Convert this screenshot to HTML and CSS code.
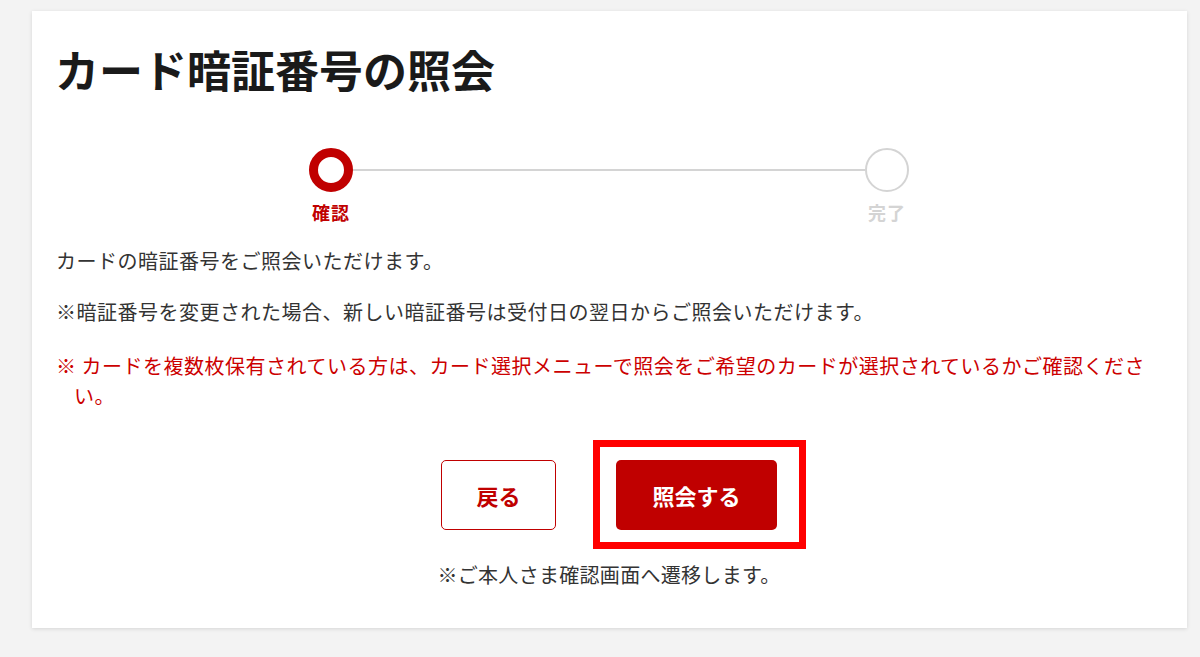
FILE: index.html
```html
<!DOCTYPE html>
<html lang="ja">

<head>
    <meta charset="UTF-8">
    <meta
        name="viewport"
        content="width=device-width, initial-scale=1.0"
    >
    <title>カード暗証番号の照会</title>
    <link rel="stylesheet" href="styles.css">
</head>

<body>
    <div class="page">
        <main class="card">
            <h1 class="card-title">カード暗証番号の照会</h1>

            <ol class="stepper">
                <li class="step step-current">
                    <span class="step-dot"></span>
                    <span class="step-label">確認</span>
                </li>
                <li class="step-line"></li>
                <li class="step">
                    <span class="step-dot"></span>
                    <span class="step-label">完了</span>
                </li>
            </ol>

            <p class="text">カードの暗証番号をご照会いただけます。</p>
            <p class="text">※暗証番号を変更された場合、新しい暗証番号は受付日の翌日からご照会いただけます。</p>
            <p class="text text-alert">※ カードを複数枚保有されている方は、カード選択メニューで照会をご希望のカードが選択されているかご確認ください。</p>

            <div class="actions">
                <button class="btn btn-back" type="button">戻る</button>
                <button class="btn btn-submit" type="submit">照会する</button>
            </div>
            <p class="note">※ご本人さま確認画面へ遷移します。</p>
        </main>
    </div>
</body>

</html>
```

FILE: styles.css
```css
body {
    margin: 0;
    background-color: #f3f3f3;
    font-family: "Noto Sans CJK JP", "Noto Sans", sans-serif;
    color: #333;
}

.page {
    padding: 11px 13px 28px 32px;
}

.card {
    background-color: #fff;
    /* Soft shadow around the panel */
    box-shadow: 0 1px 4px rgba(0, 0, 0, 0.12);
    padding: 36px 24px 38px 23px;
}

.card-title {
    margin: 0;
    font-size: 44px;
    line-height: 1;
    font-weight: 700;
    color: #1a1a1a;
}

/* Progress steps */
.stepper {
    display: flex;
    width: 600px;
    margin: 57px auto 0;
    padding: 0;
    list-style-type: none;
}

.step {
    display: flex;
    flex-direction: column;
    align-items: center;
    width: 44px;
}

.step-dot {
    box-sizing: border-box;
    width: 44px;
    height: 44px;
    border: 2px solid #d4d4d4;
    border-radius: 50%;
}

.step-label {
    margin-top: 9px;
    font-size: 18px;
    line-height: 22px;
    font-weight: 700;
    letter-spacing: 1px;
    white-space: nowrap;
    color: #d4d4d4;
}

.step-current .step-dot {
    border: 9px solid #c00000;
}

.step-current .step-label {
    color: #c00000;
}

.step-line {
    flex: 1;
    height: 2px;
    margin-top: 21px;
    background-color: #d4d4d4;
}

/* Body text */
.text {
    margin: 23px 0 0 1px;
    font-size: 20px;
    line-height: 30px;
    letter-spacing: 0.5px;
}

.text+.text {
    margin-top: 21px;
}

.text+.text-alert {
    margin-top: 24px;
}

.text-alert {
    /* Hanging indent so the wrapped line sits after the mark */
    padding-left: 0.9em;
    text-indent: -0.9em;
    color: #cc0000;
}

.actions {
    display: flex;
    justify-content: center;
    gap: 60px;
    margin-top: 49px;
}

.btn {
    box-sizing: border-box;
    height: 70px;
    border-radius: 5px;
    font-family: inherit;
    font-size: 22px;
    font-weight: 700;
    cursor: pointer;
}

.btn-back {
    width: 115px;
    border: 1px solid #c00000;
    background-color: #fff;
    color: #c00000;
}

.btn-submit {
    position: relative;
    width: 161px;
    border: 0;
    background-color: #c00000;
    color: #fff;
}

/* Highlight frame drawn over the main action */
.btn-submit::after {
    content: "";
    position: absolute;
    top: -20px;
    right: -29px;
    bottom: -19px;
    left: -23px;
    border: 7px solid #ff0000;
}

.note {
    margin: 30px 0 0;
    font-size: 20px;
    line-height: 30px;
    letter-spacing: 0.3px;
    text-align: center;
}
```
